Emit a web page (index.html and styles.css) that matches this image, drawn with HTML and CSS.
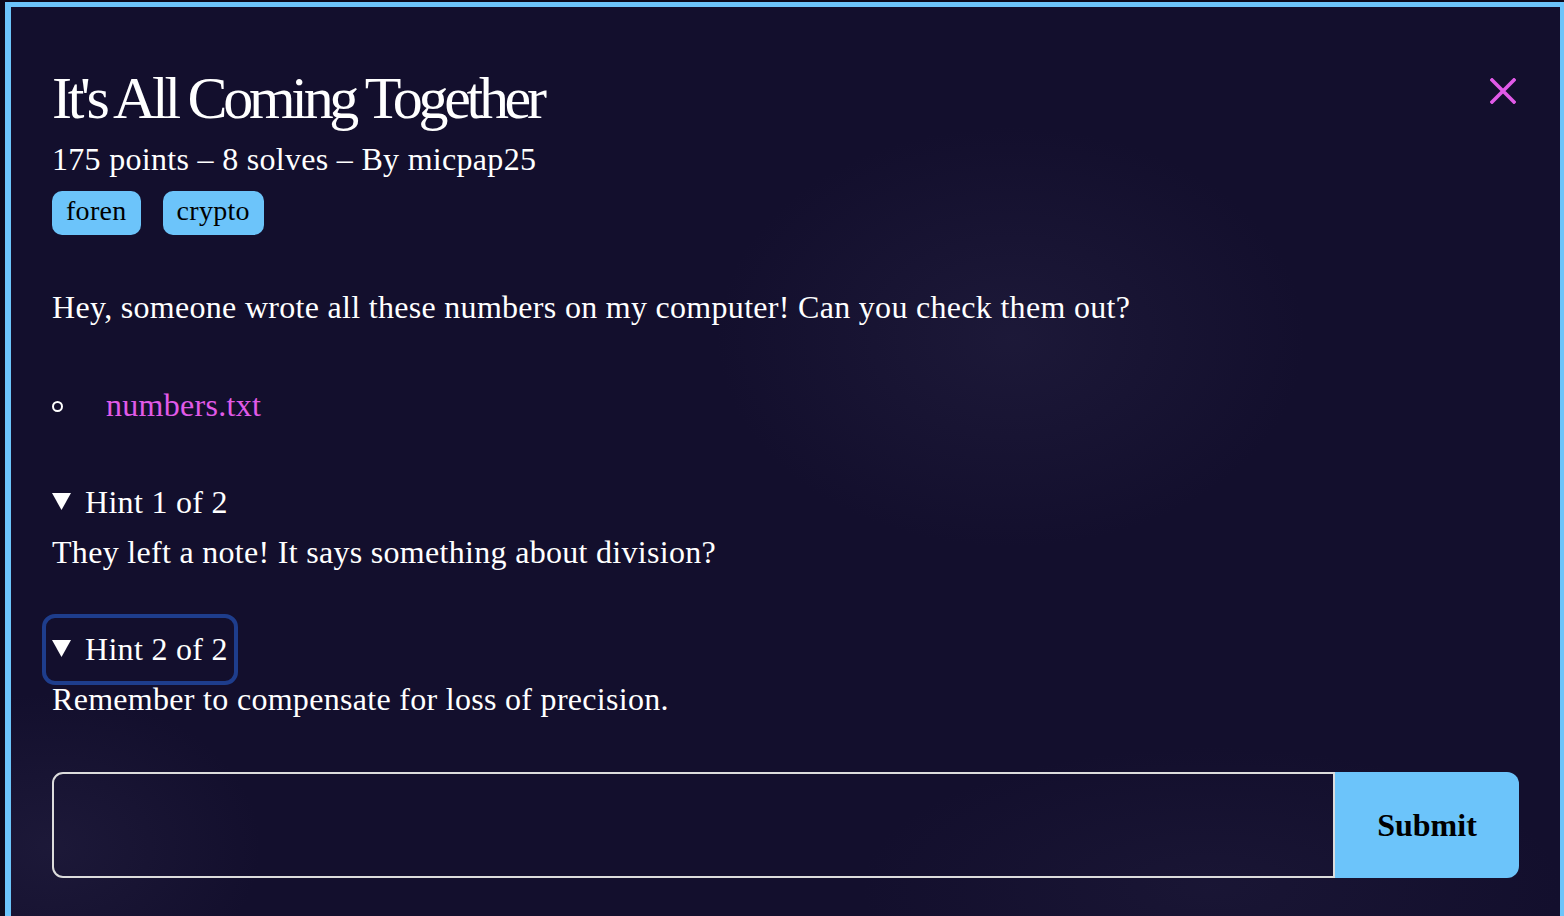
FILE: index.html
```html
<!DOCTYPE html>
<html lang="en">
<head>
<meta charset="utf-8">
<title>It's All Coming Together</title>
<link rel="stylesheet" href="styles.css">
</head>
<body>
<div class="modal">
  <div class="modal-head">
    <h1 class="title">It's All Coming Together</h1>
    <button class="close" aria-label="Close">
      <svg width="26" height="26" viewBox="0 0 26 26"><path d="M2 2 L24 24 M24 2 L2 24" stroke="#e15ae8" stroke-width="3.6" stroke-linecap="square"/></svg>
    </button>
  </div>
  <p class="meta">175 points – 8 solves – By micpap25</p>
  <div class="tags">
    <span class="tag">foren</span>
    <span class="tag">crypto</span>
  </div>
  <p class="desc">Hey, someone wrote all these numbers on my computer! Can you check them out?</p>
  <ul class="files">
    <li class="file"><span class="bullet"></span><a class="file-link" href="#">numbers.txt</a></li>
  </ul>
  <div class="hint">
    <div class="summary"><svg class="tri" width="19" height="17" viewBox="0 0 19 17"><path d="M0 0 H19 L9.5 17 Z" fill="#fff"/></svg>Hint 1 of 2</div>
    <p class="hint-text">They left a note! It says something about division?</p>
  </div>
  <div class="hint">
    <div class="summary focused"><svg class="tri" width="19" height="17" viewBox="0 0 19 17"><path d="M0 0 H19 L9.5 17 Z" fill="#fff"/></svg>Hint 2 of 2</div>
    <p class="hint-text">Remember to compensate for loss of precision.</p>
  </div>
  <form class="flag-form">
    <input class="flag-input" type="text" aria-label="Flag">
    <button class="submit" type="button">Submit</button>
  </form>
</div>
</body>
</html>
```

FILE: styles.css
```css
html, body {
  margin: 0;
  padding: 0;
}
body {
  background: #0d0a1c;
  height: 916px;
  overflow: hidden;
  font-family: "Liberation Serif", "Times New Roman", serif;
  color: #ffffff;
}
.modal {
  box-sizing: border-box;
  margin: 2px 0 0 5px;
  width: 1561px;
  min-height: 914px;
  border: 6px solid #6cc4fa;
  border-top-width: 5px;
  border-bottom: none;
  padding: 0 41px;
  letter-spacing: 0.3px;
  background:
    radial-gradient(ellipse 420px 300px at 1000px 330px, rgba(40, 36, 70, 0.45), rgba(40, 36, 70, 0) 70%),
    radial-gradient(ellipse 300px 220px at 40px 840px, rgba(40, 36, 70, 0.45), rgba(40, 36, 70, 0) 70%),
    radial-gradient(ellipse 500px 200px at 1200px 880px, rgba(40, 36, 70, 0.3), rgba(40, 36, 70, 0) 70%),
    #130f2d;
}
.modal-head {
  display: flex;
  justify-content: space-between;
  align-items: flex-start;
}
.title {
  margin: 56px 0 0 0;
  font-size: 60px;
  line-height: 70px;
  font-weight: normal;
  letter-spacing: -4.3px;
}
.close {
  margin: 71px 3px 0 0;
  padding: 0;
  border: 0;
  background: none;
  width: 26px;
  height: 26px;
  display: flex;
}
.meta {
  margin: 8px 0 0 0;
  font-size: 32px;
  line-height: 37px;
}
.tags {
  display: flex;
  gap: 22px;
  margin-top: 13px;
}
.tag {
  background: #6cc4fa;
  color: #000;
  border-radius: 10px;
  font-size: 28px;
  line-height: 38px;
  padding: 1px 14px 5px 14px;
}
.desc {
  margin: 54px 0 0 0;
  font-size: 32px;
  line-height: 37px;
}
.files {
  list-style: none;
  margin: 61px 0 0 0;
  padding: 0;
}
.file {
  display: flex;
  align-items: center;
  font-size: 32px;
  line-height: 37px;
}
.bullet {
  box-sizing: border-box;
  width: 11px;
  height: 11px;
  border: 2px solid #fff;
  border-radius: 50%;
  margin-right: 43px;
  margin-top: 2px;
}
.file-link {
  color: #e15ae8;
  text-decoration: none;
}
.hint {
  margin-top: 50px;
}
.summary {
  width: fit-content;
  padding: 10px 3px 10px 3px;
  margin-left: -3px;
  font-size: 32px;
  line-height: 37px;
  display: flex;
  align-items: center;
  border-radius: 6px;
}
.tri {
  margin-right: 14px;
  margin-top: -2px;
}
.focused {
  outline: 4px solid #1e3d8c;
  outline-offset: 3px;
}
.hint-text {
  margin: 3px 0 0 0;
  font-size: 32px;
  line-height: 37px;
}
.flag-form {
  display: flex;
  margin-top: 54px;
  height: 106px;
}
.flag-input {
  flex: 1;
  box-sizing: border-box;
  height: 106px;
  background: transparent;
  border: 2px solid #dcdcdc;
  border-radius: 11px 0 0 11px;
  margin: 0;
  color: #fff;
  font-size: 32px;
  font-family: inherit;
  outline: none;
}
.submit {
  width: 184px;
  height: 106px;
  margin: 0;
  border: 0;
  background: #6cc4fa;
  border-radius: 0 12px 12px 0;
  color: #000;
  font-family: "Liberation Serif", "Times New Roman", serif;
  font-weight: bold;
  font-size: 32px;
  padding: 0;
}
```
